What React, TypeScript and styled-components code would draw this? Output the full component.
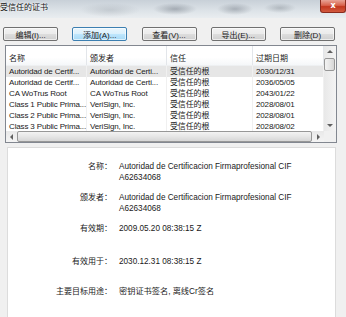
import React from 'react';
import styled, { createGlobalStyle } from 'styled-components';

const GlobalStyle = createGlobalStyle`
    html, body {
        margin: 0;
        padding: 0;
        background: #f0f0f0;
    }
    body {
        width: 346px;
        height: 317px;
        overflow: hidden;
        font-family: 'Liberation Sans', 'Noto Sans CJK SC', sans-serif;
        font-size: 8.2px;
        color: #1a1a1a;
    }
`;

const Window = styled.div`
    display: flex;
    flex-direction: column;
    width: 346px;
    height: 317px;
    background: #f0f0f0;
    overflow: hidden;
`;

const TitleBar = styled.div`
    display: flex;
    align-items: flex-start;
    justify-content: space-between;
    height: 18px;
    flex-shrink: 0;
    background:
        radial-gradient(ellipse 22px 6px at 175px 9px, rgba(120, 128, 138, 0.55), transparent),
        radial-gradient(ellipse 18px 6px at 235px 9px, rgba(120, 128, 138, 0.5), transparent),
        radial-gradient(ellipse 16px 5px at 280px 8px, rgba(130, 138, 146, 0.45), transparent),
        radial-gradient(ellipse 30px 7px at 110px 10px, rgba(150, 158, 166, 0.35), transparent),
        linear-gradient(#c8d0d8, #dde3e8 60%, #e9edf0);
`;

const Title = styled.span`
    padding: 3px 0 0 0;
    font-size: 8px;
    line-height: 10px;
    color: #111;
    text-shadow: 0 0 3px #fff, 0 0 2px #fff;
`;

const CloseButton = styled.div`
    display: flex;
    align-items: center;
    justify-content: center;
    width: 26px;
    height: 13px;
    border: 1px solid #8a2b1e;
    border-top: none;
    border-radius: 0 0 3px 3px;
    background: linear-gradient(#e8a396, #d8624c 45%, #c3371f 55%, #d25a3f);
    color: #fff;
    font-family: 'DejaVu Sans', sans-serif;
    font-size: 8px;
    font-weight: bold;
    line-height: 1;
    box-sizing: border-box;
`;

const ButtonRow = styled.div`
    display: flex;
    justify-content: space-between;
    margin: 9px 11px 0 3px;
    height: 14px;
`;

const Button = styled.div<{ $focused?: boolean }>`
    display: flex;
    align-items: center;
    justify-content: center;
    width: 55px;
    height: 14px;
    box-sizing: border-box;
    border: 1px solid ${(p) => (p.$focused ? '#3c7fb1' : '#707070')};
    border-radius: 2px;
    background: ${(p) =>
        p.$focused
            ? 'linear-gradient(#eaf6fd, #d9f0fc 50%, #bee6fd 51%, #a7d9f5)'
            : 'linear-gradient(#f2f2f2, #ebebeb 50%, #dddddd 51%, #cfcfcf)'};
    box-shadow: inset 0 0 0 1px rgba(255, 255, 255, 0.6);
    color: #1a1a1a;
    font-size: 8px;
`;

const ListView = styled.div`
    display: grid;
    grid-template-columns: 1fr 12px;
    grid-template-rows: 1fr 11px;
    margin: 4px 9px 0 5px;
    height: 98px;
    box-sizing: border-box;
    border: 1px solid #828790;
    background: #fff;
`;

const ListBody = styled.div`
    overflow: hidden;
`;

const columns = '81px 80px 86px 1fr';

const HeaderRow = styled.div`
    display: grid;
    grid-template-columns: ${columns};
    height: 20px;
    background: linear-gradient(#ffffff, #ffffff 60%, #f5f7f9);
    border-bottom: 1px solid #eef0f2;
    box-sizing: border-box;
`;

const HeaderCell = styled.div`
    display: flex;
    align-items: flex-end;
    padding: 0 0 2px 3px;
    border-right: 1px solid #e3e6ea;
    color: #1a1a1a;
    font-size: 8px;
`;

const Row = styled.div<{ $selected?: boolean }>`
    display: grid;
    grid-template-columns: ${columns};
    height: 11px;
    background: ${(p) => (p.$selected ? '#e6e6e6' : 'transparent')};
`;

const Cell = styled.div`
    padding-left: 3px;
    line-height: 11px;
    font-size: 8px;
    letter-spacing: -0.15px;
    white-space: nowrap;
    overflow: hidden;
    border-right: 1px solid #f0f0f0;
`;

const VScroll = styled.div`
    display: flex;
    flex-direction: column;
    background: linear-gradient(90deg, #e8e8e8, #f4f4f4);
`;

const HScroll = styled.div`
    display: flex;
    align-items: stretch;
    background: linear-gradient(#e8e8e8, #f4f4f4);
`;

const Arrow = styled.div`
    display: flex;
    align-items: center;
    justify-content: center;
    flex: 0 0 11px;
`;

const Track = styled.div`
    flex: 1;
    display: flex;
`;

const Thumb = styled.div<{ $vertical?: boolean }>`
    box-sizing: border-box;
    border: 1px solid #979797;
    border-radius: 2px;
    background: ${(p) =>
        p.$vertical
            ? 'linear-gradient(90deg, #f3f3f3, #e6e6e6 50%, #d6d6d6)'
            : 'linear-gradient(#f3f3f3, #e6e6e6 50%, #d6d6d6)'};
    ${(p) => (p.$vertical ? 'width: 11px; height: 13px; margin: 1px 0 0 0;' : 'flex: 1; margin: 0 1px 0 0;')}
`;

const Corner = styled.div`
    background: #f0f0f0;
`;

const DetailPanel = styled.div`
    flex: 1;
    margin: 4px 10px 0 7px;
    padding-top: 13px;
    background: #fff;
    border: 1px solid #dcdcdc;
    border-bottom: none;
`;

const DetailRow = styled.div<{ $gap: number }>`
    display: grid;
    grid-template-columns: 104px 1fr;
    column-gap: 7px;
    margin-top: ${(p) => p.$gap}px;
    line-height: 11px;
`;

const Label = styled.div`
    text-align: right;
    font-size: 8px;
`;

const Value = styled.div`
    display: flex;
    flex-direction: column;
`;

const Tri = ({ dir }: { dir: 'up' | 'down' | 'left' | 'right' }) => {
    const points = {
        up: '0,3 3,0 6,3',
        down: '0,0 6,0 3,3',
        left: '3,0 3,6 0,3',
        right: '0,0 0,6 3,3',
    }[dir];
    const vertical = dir === 'up' || dir === 'down';
    return (
        <svg width={vertical ? 6 : 3} height={vertical ? 3 : 6} viewBox={vertical ? '0 0 6 3' : '0 0 3 6'}>
            <polygon points={points} fill="#606060" />
        </svg>
    );
};

const certs = [
    ['Autoridad de Certif...', 'Autoridad de Certi...', '受信任的根', '2030/12/31'],
    ['Autoridad de Certif...', 'Autoridad de Certi...', '受信任的根', '2036/05/05'],
    ['CA WoTrus Root', 'CA WoTrus Root', '受信任的根', '2043/01/22'],
    ['Class 1 Public Prima...', 'VeriSign, Inc.', '受信任的根', '2028/08/01'],
    ['Class 2 Public Prima...', 'VeriSign, Inc.', '受信任的根', '2028/08/01'],
    ['Class 3 Public Prima...', 'VeriSign, Inc.', '受信任的根', '2028/08/02'],
];

const details: { label: string; lines: string[]; gap: number }[] = [
    { label: '名称：', lines: ['Autoridad de Certificacion Firmaprofesional CIF', 'A62634068'], gap: 0 },
    { label: '颁发者：', lines: ['Autoridad de Certificacion Firmaprofesional CIF', 'A62634068'], gap: 9 },
    { label: '有效期：', lines: ['2009.05.20 08:38:15 Z'], gap: 9 },
    { label: '有效用于：', lines: ['2030.12.31 08:38:15 Z'], gap: 22 },
    { label: '主要目标用途：', lines: ['密钥证书签名, 离线Cr签名'], gap: 19 },
];

export default function App() {
    return (
        <>
            <GlobalStyle />
            <Window>
                <TitleBar>
                    <Title>受信任的证书</Title>
                    <CloseButton>x</CloseButton>
                </TitleBar>
                <ButtonRow>
                    <Button>编辑(I)...</Button>
                    <Button $focused>添加(A)...</Button>
                    <Button>查看(V)...</Button>
                    <Button>导出(E)...</Button>
                    <Button>删除(D)</Button>
                </ButtonRow>
                <ListView>
                    <ListBody>
                        <HeaderRow>
                            <HeaderCell>名称</HeaderCell>
                            <HeaderCell>颁发者</HeaderCell>
                            <HeaderCell>信任</HeaderCell>
                            <HeaderCell>过期日期</HeaderCell>
                        </HeaderRow>
                        {certs.map((c, i) => (
                            <Row key={i} $selected={i === 0}>
                                {c.map((v, j) => (
                                    <Cell key={j}>{v}</Cell>
                                ))}
                            </Row>
                        ))}
                    </ListBody>
                    <VScroll>
                        <Arrow>
                            <Tri dir="up" />
                        </Arrow>
                        <Track>
                            <Thumb $vertical />
                        </Track>
                        <Arrow>
                            <Tri dir="down" />
                        </Arrow>
                    </VScroll>
                    <HScroll>
                        <Arrow>
                            <Tri dir="left" />
                        </Arrow>
                        <Track>
                            <Thumb />
                        </Track>
                        <Arrow>
                            <Tri dir="right" />
                        </Arrow>
                    </HScroll>
                    <Corner />
                </ListView>
                <DetailPanel>
                    {details.map((d) => (
                        <DetailRow key={d.label} $gap={d.gap}>
                            <Label>{d.label}</Label>
                            <Value>
                                {d.lines.map((l) => (
                                    <span key={l}>{l}</span>
                                ))}
                            </Value>
                        </DetailRow>
                    ))}
                </DetailPanel>
            </Window>
        </>
    );
}
